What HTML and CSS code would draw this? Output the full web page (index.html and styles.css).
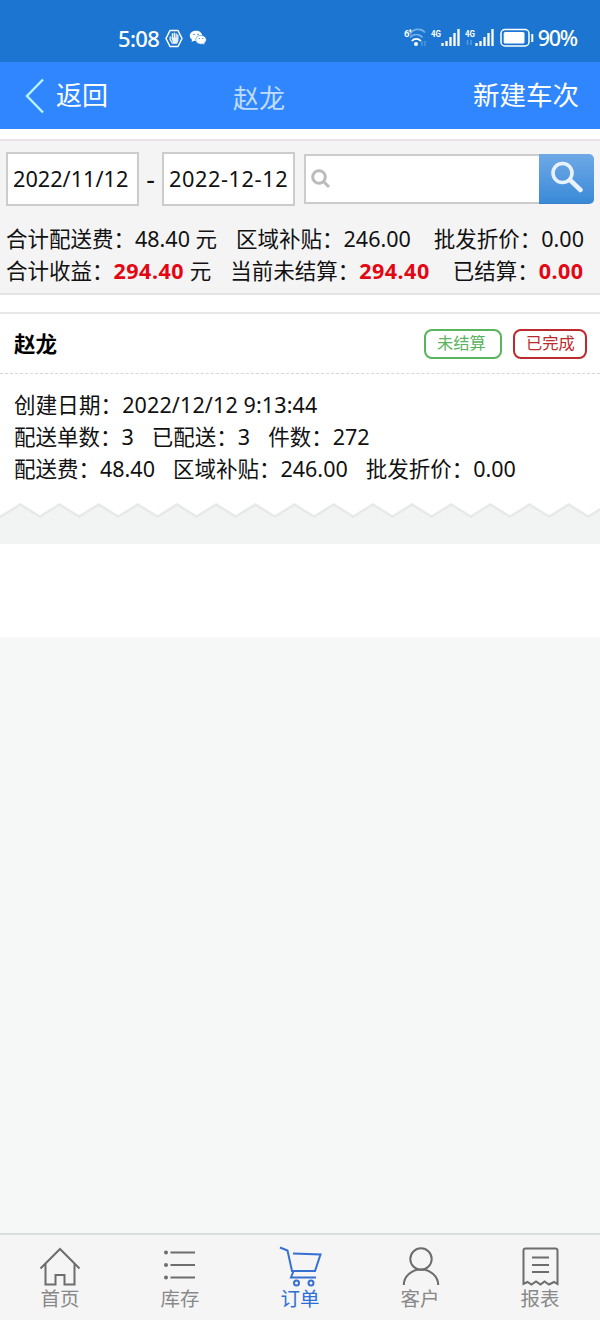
FILE: index.html
```html
<!DOCTYPE html>
<html lang="zh-CN">
<head>
    <meta charset="UTF-8">
    <meta name="viewport" content="width=device-width, initial-scale=1.0">
    <title>赵龙</title>
    <link rel="stylesheet" href="styles.css">
</head>
<body>
<div class="status">
    <div class="status-left">
        <span class="time">5:08</span>
        <svg class="hand" width="18" height="19" viewBox="0 0 18 19">
            <path d="M5 1.5h8l4 8-4 8H5l-4-8z" fill="none" stroke="#fff" stroke-width="1.5" stroke-linejoin="round"/>
            <path d="M5.2 8v2.5l2.2 3.6h4.2l1.2-3V6M7.4 10V4.8M9.3 10V4.2M11.1 10V4.9" fill="none" stroke="#e6f1fb" stroke-width="1.4" stroke-linecap="round"/>
            <path d="M6.5 8.5h6v3l-1 2.8H8z" fill="#e6f1fb"/>
        </svg>
        <svg class="wechat" width="18" height="16" viewBox="0 0 18 16">
            <path d="M7 .8C3.4.8.8 3 .8 5.8c0 1.6.9 3 2.300 3.900L2.500 12l2.500-1.300c.6.200 1.300.3 2 .3 3.500 0 6.200-2.300 6.200-5.200S10.500.8 7 .8z" fill="#fff"/>
            <path d="M12 5.400c-3 0-5.300 1.900-5.300 4.400s2.300 4.400 5.300 4.400c.6 0 1.200-.1 1.700-.3l2.100 1.100-.5-1.900c1.200-.8 2-2 2-3.300 0-2.500-2.300-4.400-5.300-4.400z" fill="#fff" stroke="#1b75d1" stroke-width=".5"/>
            <g fill="#1b75d1"><circle cx="5" cy="4.500" r=".7"/><circle cx="9" cy="4.500" r=".7"/><circle cx="10.300" cy="8.500" r=".6"/><circle cx="13.800" cy="8.500" r=".6"/></g>
        </svg>
    </div>
    <div class="status-right">
        <svg width="24" height="20" viewBox="0 0 24 20">
            <text class="mini" x="0" y="9">6</text>
            <path d="M6.300 1v4M4.500 3h4" stroke="#fff" stroke-width="1"/>
            <path d="M6 6.500a9 9 0 0 1 15-2" fill="none" stroke="#76b0e8" stroke-width="1.700"/>
            <path d="M6 9.500a8 8 0 0 1 12.500 0" fill="none" stroke="#76b0e8" stroke-width="1.700"/>
            <path d="M7.800 13a6 6 0 0 1 9 0" fill="none" stroke="#fff" stroke-width="1.800"/>
            <circle cx="12" cy="16" r="2" fill="#fff"/>
            <path d="M18 13v5M21 13v5" stroke="#5b9fe0" stroke-width="1.200"/>
        </svg>
        <svg class="signal" width="30" height="20" viewBox="0 0 30 20">
            <text class="mini" x="0" y="9" textLength="10" lengthAdjust="spacingAndGlyphs">4G</text>
            <path d="M11.500 18v-3M15.500 18v-5M19.500 18V9M23.500 18V5M27.500 18V1" stroke="#fff" stroke-width="2.300"/>
        </svg>
        <svg class="signal" width="30" height="20" viewBox="0 0 30 20">
            <text class="mini" x="0" y="9" textLength="10" lengthAdjust="spacingAndGlyphs">4G</text>
            <path d="M2.500 12v5M6 12v5" stroke="#5b9fe0" stroke-width="1.400"/>
            <path d="M11.500 18v-3M15.500 18v-5M19.500 18V9M23.500 18V5M27.500 18V1" stroke="#fff" stroke-width="2.300"/>
        </svg>
        <svg class="battery" width="34" height="20" viewBox="0 0 34 20">
            <rect x="1" y="1.500" width="28" height="16.500" rx="4" fill="none" stroke="#fff" stroke-width="1.500"/>
            <rect x="3.700" y="4" width="20.800" height="11.500" rx="1.500" fill="#fff"/>
            <path d="M32.300 6v8" stroke="#fff" stroke-width="2"/>
        </svg>
        <span class="percent">90%</span>
    </div>
</div>
<header class="header">
    <a class="back">
        <svg width="20" height="36" viewBox="0 0 20 36"><path d="M18 1.500L2 18l16 16.500" fill="none" stroke="#b8f3ff" stroke-width="2.400"/></svg>
        <span>返回</span>
    </a>
    <h1>赵龙</h1>
    <a class="create">新建车次</a>
</header>
<section class="filter">
    <div class="search-row">
        <div class="date">2022/11/12</div>
        <span class="dash">-</span>
        <div class="date date-end">2022-12-12</div>
        <div class="search">
            <svg width="20" height="20" viewBox="0 0 20 20"><circle cx="8" cy="8" r="6.300" fill="none" stroke="#bbb" stroke-width="3"/><path d="M12.500 12.500l5.500 5.500" stroke="#bbb" stroke-width="3"/></svg>
        </div>
        <div class="search-btn">
            <svg width="34" height="34" viewBox="0 0 34 34"><circle cx="13.500" cy="12" r="9.500" fill="none" stroke="#e9f1fc" stroke-width="3.600"/><path d="M21 19l10.500 10" stroke="#e9f1fc" stroke-width="4.500" stroke-linecap="round"/></svg>
        </div>
    </div>
    <div class="total">
        <span>合计配送费：48.40 元</span>
        <span>区域补贴：246.00</span>
        <span>批发折价：0.00</span>
    </div>
    <div class="total">
        <span>合计收益：<b>294.40</b> 元</span>
        <span>当前未结算：<b>294.40</b></span>
        <span>已结算：<b>0.00</b></span>
    </div>
</section>
<section class="card">
    <div class="card-head">
        <strong>赵龙</strong>
        <span class="tag green">未结算</span>
        <span class="tag red">已完成</span>
    </div>
    <div class="card-body">
        <div class="line created"><span>创建日期：2022/12/12 9:13:44</span></div>
        <div class="line"><span>配送单数：3</span><span>已配送：3</span><span>件数：272</span></div>
        <div class="line"><span>配送费：48.40</span><span>区域补贴：246.00</span><span>批发折价：0.00</span></div>
    </div>
    <svg class="wave" width="600" height="42" viewBox="0 0 600 42">
        <defs>
            <pattern id="zigzag" x="0.700" width="39.170" height="42" patternUnits="userSpaceOnUse">
                <path d="M-1 15.300L0 14.600L19.600 2.500L39.170 14.600L40.200 15.300V42H-1z" fill="#f2f4f4"/>
                <path d="M-19.600 2.500L0 14.600L19.600 2.500L39.170 14.600L58.800 2.500" fill="none" stroke="#e7e8e8" stroke-width="2.400"/>
            </pattern>
        </defs>
        <rect width="600" height="42" fill="url(#zigzag)"/>
    </svg>
</section>
<div class="more"></div>
<nav class="tabs">
    <a class="tab">
        <svg width="44" height="42" viewBox="0 0 44 42"><path d="M2.500 22.500L22 3l19.500 19.500M7.500 18v20.500h10V29h9v9.500h10V18"/></svg>
        <span>首页</span>
    </a>
    <a class="tab">
        <svg width="44" height="42" viewBox="0 0 44 42"><path d="M12.500 6.500H37M12.500 19H37M12.500 31.500H37"/><g class="dots"><circle cx="8" cy="6.500" r="2"/><circle cx="8" cy="19" r="2"/><circle cx="8" cy="31.500" r="2"/></g></svg>
        <span>库存</span>
    </a>
    <a class="tab active">
        <svg width="44" height="42" viewBox="0 0 44 42"><path d="M2 1.500l7.500 3L14 25h23l5.500-16.500L15 7.500M15.500 25l-2.500 6.500h25"/><circle cx="18.500" cy="37" r="2.500"/><circle cx="33" cy="37" r="2.500"/></svg>
        <span>订单</span>
    </a>
    <a class="tab">
        <svg width="44" height="42" viewBox="0 0 44 42"><circle cx="23" cy="13" r="10.700"/><path d="M5.800 39a17.200 15.500 0 0 1 34.400 0"/></svg>
        <span>客户</span>
    </a>
    <a class="tab">
        <svg width="44" height="42" viewBox="0 0 44 42"><path d="M5.500 38V4.500q0-2 2-2h30q2 0 2 2V38l-3.500-2-5 2.500-4.500-3-4 3-4.500-3-4.500 3-4-2.500zM14 11.500h17M14 19h17M14 26h17"/></svg>
        <span>报表</span>
    </a>
</nav>
</body>
</html>
```
FILE: styles.css
```css
* {
    box-sizing: border-box;
}

body {
    display: flex;
    flex-direction: column;
    height: 1320px;
    margin: 0;
    font-family: 'Noto Sans', 'Noto Sans CJK SC', sans-serif;
    font-size: 21.5px;
    color: #111;
    background-color: #f6f8f8;
}

.status {
    display: flex;
    justify-content: space-between;
    height: 62px;
    padding: 23px 23px 0 118px;
    color: #fff;
    background-color: #1b75d1;
}

.status-left,
.status-right {
    display: flex;
    align-items: center;
    height: 30px;
}

.time,
.percent {
    margin-top: -1px;
    font-size: 22px;
    font-weight: 500;
    letter-spacing: -0.6px;
}

.percent {
    font-size: 21.5px;
    letter-spacing: -1.2px;
}

.hand {
    margin-left: 6px;
}

.wechat {
    margin-left: 6px;
}

.signal {
    margin-left: 3px;
}

.signal + .signal {
    margin-left: 4px;
}

.battery {
    margin: 0 4px 0 5px;
}

.mini {
    font: bold 9.5px Roboto, sans-serif;
    fill: #fff;
}

.header {
    display: flex;
    align-items: center;
    height: 67px;
    padding: 0 21px 0 25px;
    font-size: 26px;
    color: #fff;
    background-color: #3086ff;
}

.back {
    display: flex;
    align-items: center;
    gap: 11px;
    width: 158px;
}

.back span {
    margin-bottom: 4px;
}

.create {
    width: 158px;
    margin-bottom: 5px;
    font-size: 26.5px;
    text-align: right;
}

.header h1 {
    flex: 1;
    margin: 2px 0 0;
    padding-left: 50px;
    font-size: 26px;
    font-weight: 400;
    color: #bfdcff;
}

.filter {
    flex: none;
    height: 156px;
    margin-top: 10px;
    padding: 11px 6px 0;
    border-top: 2px solid #ebe3e9;
    border-bottom: 2px solid #e4e4e4;
    background-color: #f4f4f4;
    box-shadow: 0 -10px #fff;
}

.search-row {
    display: flex;
    align-items: center;
    height: 54px;
    margin-bottom: 17px;
}

.date {
    width: 133px;
    height: 54px;
    padding-left: 5px;
    line-height: 49px;
    font-size: 21.7px;
    white-space: nowrap;
    border: 2px solid #ccc;
    background-color: #fff;
}

.date-end {
    letter-spacing: 0.6px;
}

.dash {
    width: 23px;
    font-size: 27px;
    line-height: 46px;
    text-align: center;
}

.search {
    display: flex;
    align-items: center;
    width: 235px;
    height: 50px;
    margin-left: 9px;
    padding-left: 5px;
    border: 2px solid #ccc;
    border-right: 0;
    background-color: #fff;
}

.search-btn {
    width: 55px;
    height: 50px;
    padding: 7px 0 0 10px;
    border-radius: 0 5px 5px 0;
    border-bottom: 1px solid #3a7fc8;
    background: linear-gradient(#6fa9e6, #3a8ad8);
}

.total {
    display: flex;
    height: 32px;
    line-height: 32px;
    white-space: nowrap;
}

.total span + span {
    margin-left: 19px;
}

.total span + span + span {
    margin-left: 23px;
}

.total b {
    color: #e30613;
    letter-spacing: 0.5px;
}

.card {
    flex: none;
    margin-top: 17px;
    border-top: 2px solid #e7e8e8;
    background-color: #fff;
    box-shadow: 0 -17px #fff;
}

.card-head {
    display: flex;
    align-items: center;
    height: 60px;
    padding: 0 13px 0 14px;
    border-bottom: 1px dashed #d8d8d8;
}

.card-head strong {
    flex: 1;
    margin-bottom: 2px;
    color: #000;
}

.tag {
    height: 30px;
    padding-left: 11px;
    line-height: 25px;
    font-size: 16.3px;
    border: 2px solid;
    border-radius: 8px;
}

.green {
    width: 78px;
    color: #5ab45d;
}

.red {
    width: 74px;
    margin-left: 11px;
    color: #bb2a2d;
}

.card-body {
    height: 128px;
    padding: 15px 14px 0;
}

.line {
    display: flex;
    gap: 18px;
    line-height: 32px;
}

.created {
    letter-spacing: 0.13px;
}

.wave {
    display: block;
}

.more {
    flex: none;
    height: 93px;
    background-color: #fff;
}

.tabs {
    display: flex;
    height: 87px;
    margin-top: auto;
    padding-top: 11px;
    border-top: 2px solid #dcdfdf;
    background-color: #f5f5f5;
}

.tab {
    display: flex;
    flex-direction: column;
    align-items: center;
    width: 120px;
    font-size: 19.5px;
    line-height: 22px;
    color: #898989;
}

.tab svg {
    flex: none;
    fill: none;
    stroke: #6d6d6d;
    stroke-width: 2;
}

.tab .dots {
    fill: #6d6d6d;
    stroke: none;
}

.active {
    color: #2c6fd6;
}

.active svg {
    stroke: #3670d2;
}
```
